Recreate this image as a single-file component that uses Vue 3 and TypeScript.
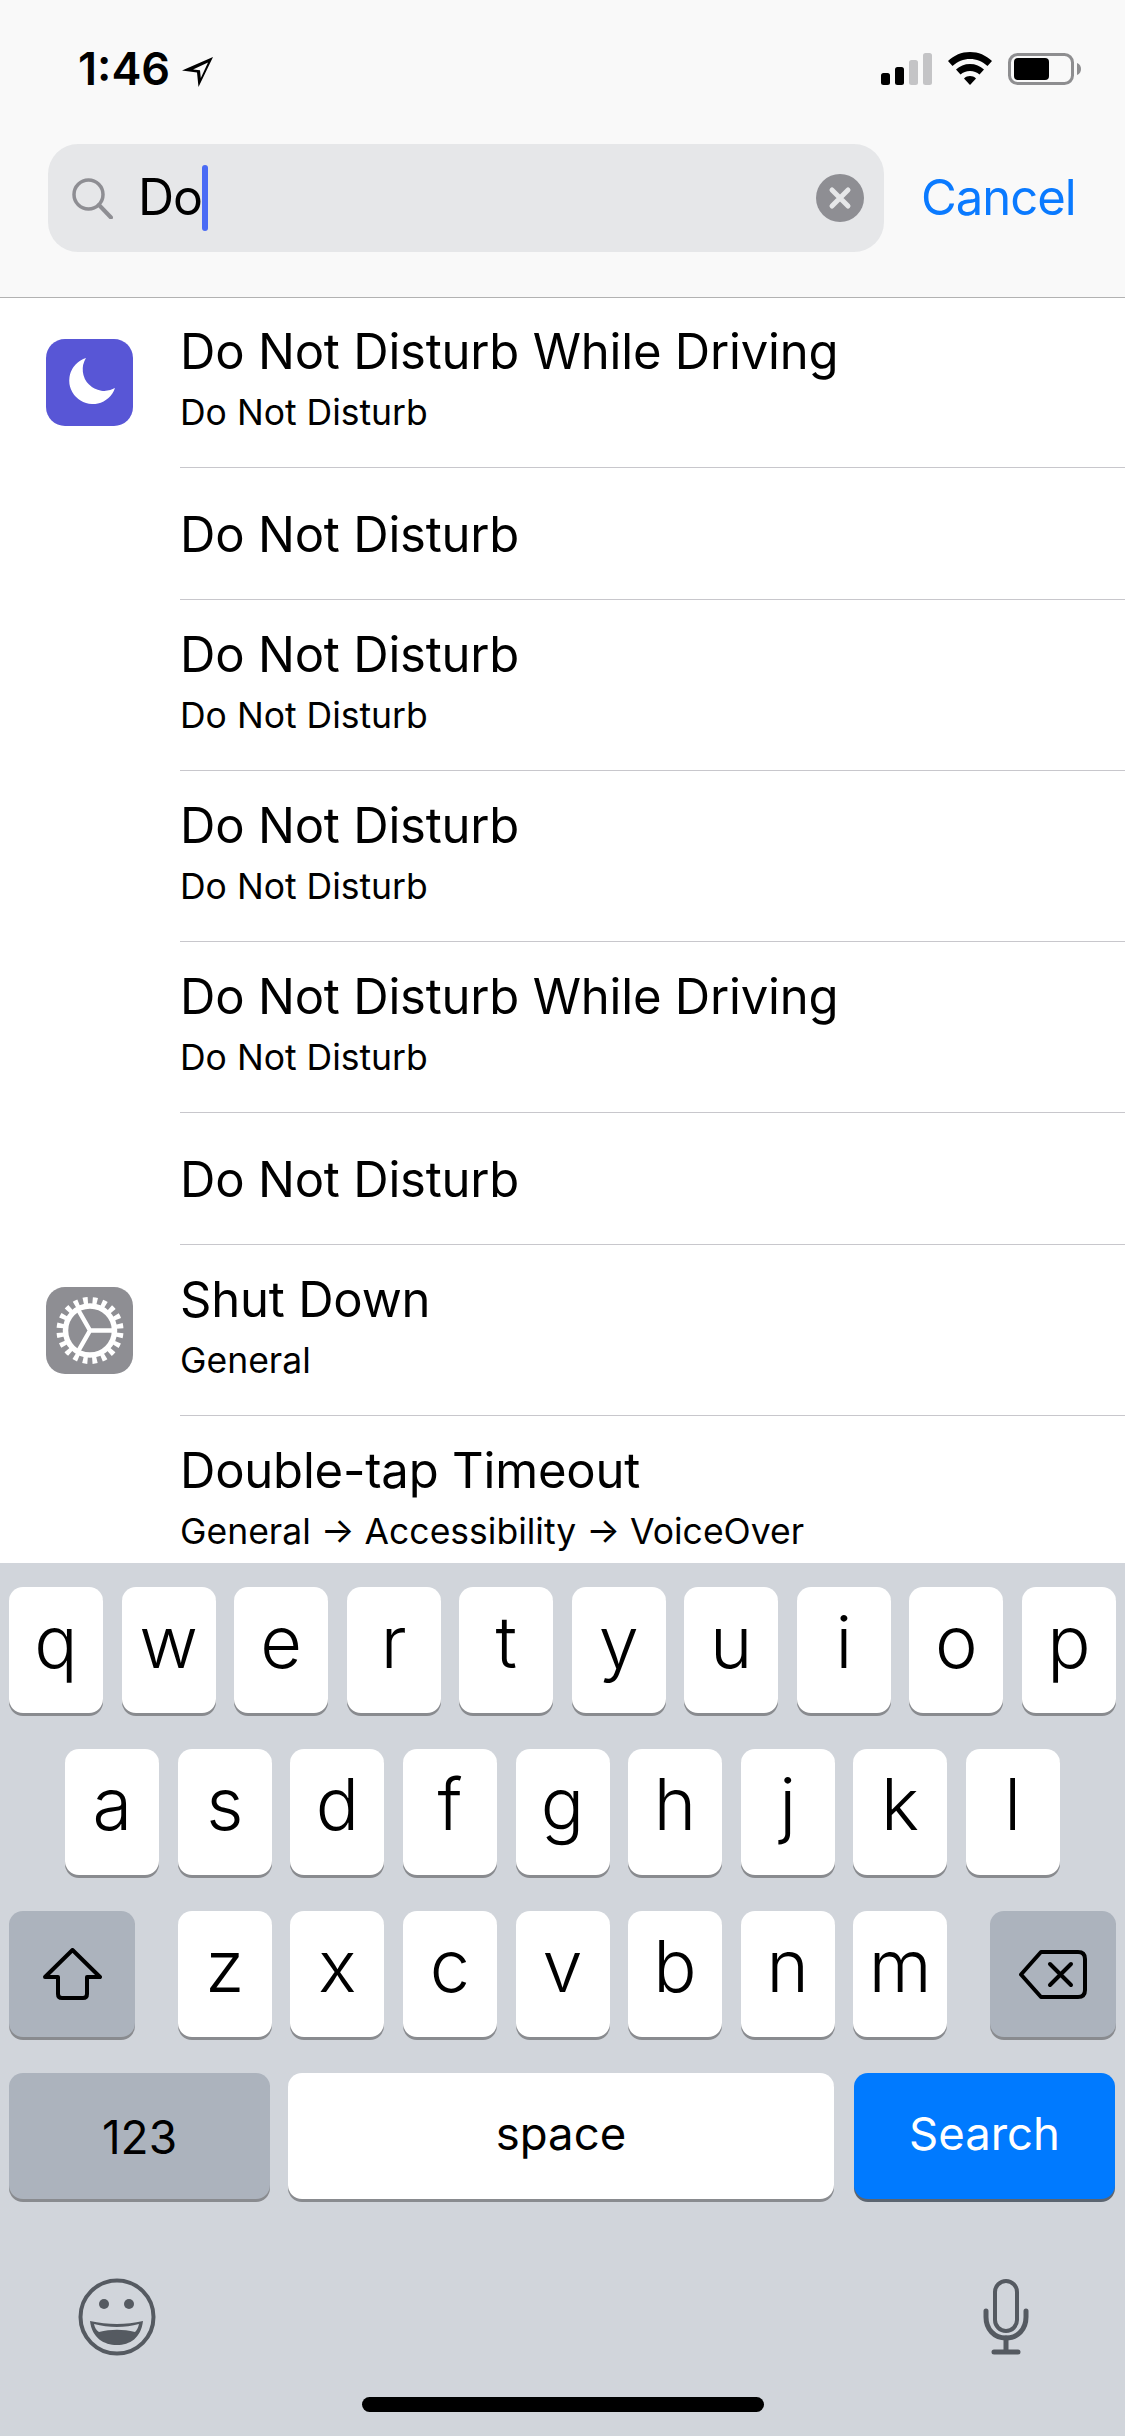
<script setup lang="ts">
interface ResultRow {
  title: string
  sub?: string
  icon?: 'moon' | 'gear'
}

const rows: ResultRow[] = [
  { title: 'Do Not Disturb While Driving', sub: 'Do Not Disturb', icon: 'moon' },
  { title: 'Do Not Disturb' },
  { title: 'Do Not Disturb', sub: 'Do Not Disturb' },
  { title: 'Do Not Disturb', sub: 'Do Not Disturb' },
  { title: 'Do Not Disturb While Driving', sub: 'Do Not Disturb' },
  { title: 'Do Not Disturb' },
  { title: 'Shut Down', sub: 'General', icon: 'gear' },
  { title: 'Double-tap Timeout', sub: 'General → Accessibility → VoiceOver' }
]

const topKeys = ['q', 'w', 'e', 'r', 't', 'y', 'u', 'i', 'o', 'p']
const midKeys = ['a', 's', 'd', 'f', 'g', 'h', 'j', 'k', 'l']
const lowKeys = ['z', 'x', 'c', 'v', 'b', 'n', 'm']
</script>

<template>
  <div class="screen">
    <header class="top">
      <div class="status">
        <div class="clock">
          <span class="time">1:46</span>
          <svg class="loc" width="31" height="30" viewBox="0 0 31 30">
            <path fill-rule="evenodd" d="M31 0 L0 13.500 L15 15.500 L16.500 30 Z M26 5.500 L11 12.500 L18 13.200 L18.800 21 Z" fill="#000" />
          </svg>
        </div>
        <div class="status-icons">
          <svg width="51" height="32" viewBox="0 0 51 32">
            <rect x="0" y="20" width="9" height="12" rx="2.500" fill="#000" />
            <rect x="14" y="14" width="9" height="18" rx="2.500" fill="#000" />
            <rect x="28" y="7" width="9" height="25" rx="2.500" fill="#c4c4c6" />
            <rect x="42" y="0" width="9" height="32" rx="2.500" fill="#c4c4c6" />
          </svg>
          <svg class="wifi" width="44" height="33" viewBox="0 0 44 33">
            <path d="M22 0 C13.500 0 6 3.300 0 9 L4.500 14 C9.500 9.500 15.500 7 22 7 C28.500 7 34.500 9.500 39.500 14 L44 9 C38 3.300 30.500 0 22 0 Z" fill="#000" />
            <path d="M22 12 C16.500 12 11.800 14 8 17.500 L12.500 22.500 C15 20.200 18.300 19 22 19 C25.700 19 29 20.200 31.500 22.500 L36 17.500 C32.200 14 27.500 12 22 12 Z" fill="#000" />
            <path d="M22 24 C19.800 24 17.800 24.800 16 26.400 L22 33 L28 26.400 C26.200 24.800 24.200 24 22 24 Z" fill="#000" />
          </svg>
          <svg class="batt" width="73" height="32" viewBox="0 0 73 32">
            <rect x="1.500" y="1.500" width="63" height="29" rx="8" fill="none" stroke="#8e8e90" stroke-width="3" />
            <rect x="6" y="5" width="35" height="22" rx="4" fill="#000" />
            <path d="M69 10 C72 11 73 13.500 73 16 C73 18.500 72 21 69 22 Z" fill="#8e8e90" />
          </svg>
        </div>
      </div>

      <div class="search-row">
        <div class="search-bar">
          <svg class="glass" width="41" height="41" viewBox="0 0 41 41">
            <circle cx="16.500" cy="16.500" r="14.500" fill="none" stroke="#8e8e93" stroke-width="3.500" />
            <path d="M27 27 L39 39.500" stroke="#8e8e93" stroke-width="4" stroke-linecap="round" />
          </svg>
          <span class="query">Do</span>
          <span class="caret"></span>
          <svg class="clear" width="48" height="48" viewBox="0 0 48 48">
            <circle cx="24" cy="24" r="24" fill="#8e8e93" />
            <path d="M16 16 L32 32 M32 16 L16 32" stroke="#e6e7e9" stroke-width="5" stroke-linecap="round" />
          </svg>
        </div>
        <span class="cancel">Cancel</span>
      </div>
    </header>

    <main class="list">
      <div v-for="(row, i) in rows" :key="i" class="row" :class="{ single: !row.sub }">
        <div class="icon-cell">
          <svg v-if="row.icon === 'moon'" width="87" height="87" viewBox="0 0 87 87">
            <rect width="87" height="87" rx="19" fill="#5856d6" />
            <path d="M40 19 A23.500 23.500 0 1 0 69 49 A21.500 21.500 0 0 1 40 19 Z" fill="#fff" />
          </svg>
          <svg v-else-if="row.icon === 'gear'" width="87" height="87" viewBox="0 0 87 87">
            <rect width="87" height="87" rx="19" fill="#8e8e93" />
            <circle cx="44" cy="43.500" r="30" fill="none" stroke="#fff" stroke-width="7" stroke-dasharray="4.600 4.825" stroke-dashoffset="-2.410" />
            <circle cx="44" cy="43.500" r="24.500" fill="none" stroke="#fff" stroke-width="5.500" />
            <path d="M44 43.500 L68 43.500 M44 43.500 L32 22.500 M44 43.500 L32 64.500" stroke="#fff" stroke-width="4.500" />
          </svg>
        </div>
        <div class="text-cell">
          <div class="title">{{ row.title }}</div>
          <div v-if="row.sub" class="sub">{{ row.sub }}</div>
        </div>
      </div>
    </main>

    <section class="keyboard">
      <div class="key-row spread">
        <div v-for="k in topKeys" :key="k" class="key">{{ k }}</div>
      </div>
      <div class="key-row center">
        <div v-for="k in midKeys" :key="k" class="key">{{ k }}</div>
      </div>
      <div class="key-row spread">
        <div class="key wide dark">
          <svg width="59" height="52" viewBox="0 0 59 52">
            <path d="M29.500 2 L57 29 L44 29 L44 46 Q44 50 40 50 L19 50 Q15 50 15 46 L15 29 L2 29 Z" fill="none" stroke="#000" stroke-width="4" stroke-linejoin="round" />
          </svg>
        </div>
        <div class="letters">
          <div v-for="k in lowKeys" :key="k" class="key">{{ k }}</div>
        </div>
        <div class="key wide dark">
          <svg width="68" height="49" viewBox="0 0 68 49">
            <path d="M22 2 L59 2 Q66 2 66 9 L66 40 Q66 47 59 47 L22 47 L2 24.500 Z" fill="none" stroke="#000" stroke-width="4" stroke-linejoin="round" />
            <path d="M31 14 L52 35 M52 14 L31 35" stroke="#000" stroke-width="4" stroke-linecap="round" />
          </svg>
        </div>
      </div>
      <div class="key-row">
        <div class="key action dark num">123</div>
        <div class="key space">space</div>
        <div class="key action go">Search</div>
      </div>
      <div class="kb-bottom">
        <svg width="78" height="78" viewBox="0 0 78 78">
          <circle cx="39" cy="39" r="36.500" fill="none" stroke="#555a61" stroke-width="4" />
          <circle cx="26" cy="26" r="5" fill="#555a61" />
          <circle cx="51" cy="26" r="5" fill="#555a61" />
          <path d="M12 43 C30 47 48 47 65 43 C63 60 52 67 39 67 C26 67 14 60 12 43 Z" fill="#555a61" />
          <path d="M16 46 C31 50 47 50 61 46 C60 50 59 52 57 54 C45 51 33 51 21 54 C18 52 17 50 16 46 Z" fill="#d1d5db" />
        </svg>
        <svg width="46" height="76" viewBox="0 0 46 76">
          <rect x="12" y="2" width="22" height="50" rx="11" fill="none" stroke="#555a61" stroke-width="4" />
          <path d="M3 32 L3 38 C3 50 11 59 23 59 C35 59 43 50 43 38 L43 32" fill="none" stroke="#555a61" stroke-width="5" stroke-linecap="round" />
          <path d="M23 59 L23 73 M11 73 L35 73" stroke="#555a61" stroke-width="5" stroke-linecap="round" />
        </svg>
      </div>
      <div class="home-bar"></div>
    </section>
  </div>
</template>

<style>
body {
  margin: 0;
}
</style>

<style scoped>
.screen {
  position: relative;
  width: 1125px;
  height: 2436px;
  overflow: hidden;
  display: flex;
  flex-direction: column;
  background: #fff;
  font-family: Inter, "Liberation Sans", sans-serif;
  color: #000;
}

/* Header */
.top {
  position: relative;
  z-index: 1;
  height: 298px;
  box-sizing: border-box;
  flex: none;
  background: #f9f9f9;
  border-bottom: 1px solid #b2b2b2;
}

.status {
  height: 144px;
  box-sizing: border-box;
  padding: 52px 44px 0 78px;
  display: flex;
  justify-content: space-between;
  align-items: flex-start;
}

.clock {
  display: flex;
  align-items: center;
  height: 33px;
}

.time {
  font-size: 45px;
  font-weight: 600;
  line-height: 33px;
}

.loc {
  margin-left: 12px;
  margin-top: 6px;
}

.status-icons {
  display: flex;
  align-items: center;
  height: 33px;
}

.wifi {
  margin-left: 16px;
}

.batt {
  margin-left: 16px;
}

.search-row {
  display: flex;
  align-items: center;
  padding-left: 48px;
}

.search-bar {
  position: relative;
  width: 836px;
  height: 108px;
  border-radius: 30px;
  background: #e6e7e9;
  display: flex;
  align-items: center;
  padding-left: 24px;
  box-sizing: border-box;
}

.query {
  margin-left: 25px;
  margin-bottom: 2px;
  font-size: 50px;
  letter-spacing: -1px;
}

.caret {
  width: 6px;
  height: 66px;
  border-radius: 3px;
  background: #4a6bf5;
}

.clear {
  margin-left: auto;
  margin-right: 20px;
}

.cancel {
  margin-left: 37px;
  margin-bottom: 2px;
  font-size: 49px;
  letter-spacing: -1px;
  color: #0a7aff;
}

/* Results */
.list {
  flex: 1;
  min-height: 0;
  overflow: hidden;
  margin-top: -1px;
}

.row {
  display: flex;
  height: 171px;
}

.row.single {
  height: 132px;
}

.icon-cell {
  width: 180px;
  flex: none;
  box-sizing: border-box;
  padding: 42px 0 0 46px;
}

.text-cell {
  flex: 1;
  box-sizing: border-box;
  padding-top: 25px;
  border-bottom: 1px solid #c8c7cc;
}

.single .text-cell {
  padding-top: 37px;
}

.title {
  font-size: 49px;
  line-height: 60px;
  letter-spacing: -0.2px;
}

.sub {
  margin-top: 7px;
  font-size: 35.500px;
  line-height: 48px;
}

/* Keyboard */
.keyboard {
  position: relative;
  flex: none;
  height: 873px;
  box-sizing: border-box;
  padding: 24px 9px 0;
  background: #d1d5db;
}

.key-row {
  display: flex;
  margin-bottom: 36px;
}

.spread {
  justify-content: space-between;
}

.center {
  justify-content: center;
  gap: 18.560px;
}

.letters {
  display: flex;
  gap: 18.560px;
}

.key {
  width: 94px;
  height: 126px;
  flex: none;
  border-radius: 14px;
  background: #fff;
  box-shadow: 0 3px 0 #898b8f;
  display: flex;
  align-items: center;
  justify-content: center;
  font-size: 72px;
  font-weight: 350;
  padding-bottom: 17px;
  box-sizing: border-box;
}

.wide {
  width: 126px;
  padding-bottom: 0;
}

.dark {
  background: #acb3bd;
}

.action {
  width: 261px;
  font-size: 45.500px;
  font-weight: 400;
  padding-bottom: 5px;
}

.num {
  font-size: 46px;
  padding-bottom: 0;
  padding-top: 2px;
}

.space {
  width: 546px;
  margin-left: 18px;
  font-size: 45.500px;
  font-weight: 400;
  padding-bottom: 5px;
}

.go {
  margin-left: 20px;
  background: #007aff;
  color: #fff;
  box-shadow: 0 3px 0 #5c6570;
}

.kb-bottom {
  display: flex;
  justify-content: space-between;
  align-items: center;
  padding: 43px 87px 0 69px;
}

.home-bar {
  position: absolute;
  left: 362px;
  bottom: 24px;
  width: 402px;
  height: 15px;
  border-radius: 8px;
  background: #000;
}
</style>
